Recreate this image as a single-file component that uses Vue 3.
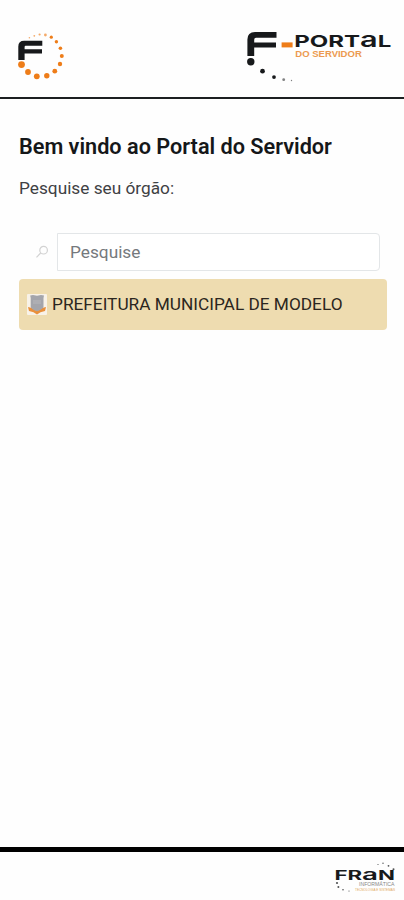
<script setup>
import { ref } from 'vue'

const query = ref('')
const orgs = [{ id: 1, name: 'PREFEITURA MUNICIPAL DE MODELO' }]

const ring = [
  [21.5, 64.6, 3.4], [28, 72, 2.9], [36.8, 76.3, 2.9], [46.8, 75.8, 2.7],
  [54.8, 71.2, 2.4], [60, 64, 2.2], [61.8, 56, 2], [60.4, 48.3, 1.8],
  [56.4, 41.7, 1.7], [51.3, 37.2, 1.6], [45.4, 35, 1.4], [39.6, 34.5, 1.1],
  [34.3, 35.8, 0.9], [29.4, 37.8, 0.8],
]
const tail = [[250.8, 61.7, 3.7], [262.5, 71.2, 2.4], [274, 77.1, 1.9], [283.7, 79.7, 1.4], [291.5, 80.5, 0.7]]
const franDots = [
  [378, 864.5, 0.6], [383, 863.3, 0.7], [388.5, 865.8, 0.9], [393.5, 869.3, 1],
  [337, 883, 1.1], [338.4, 887, 1], [343, 889.8, 0.8], [349, 891, 0.6],
]
</script>

<template>
  <div class="screen">
    <header class="header">
      <svg class="mark" width="64" height="60" viewBox="10 28 64 60" aria-hidden="true">
        <path class="ink" d="M18.3 60V46.5Q18.3 40.7 24.2 40.7H42.3V45.8H25.6Q24.6 45.8 24.6 47V49.2H42V53.4H24.6V60Z" />
        <circle v-for="(d, i) in ring" :key="i" :cx="d[0]" :cy="d[1]" :r="d[2]" :class="i > 9 ? 'amber pale' : 'amber'" />
      </svg>
      <svg class="portal" width="152" height="60" viewBox="243 28 152 60">
        <path class="ink" d="M247.4 56V39.5Q247.4 32 255 32H276.5V37.8H256Q254.2 37.8 254.2 39.8V42.4H276V47.6H254.2V56Z" />
        <circle v-for="(d, i) in tail" :key="i" :cx="d[0]" :cy="d[1]" :r="d[2]" :class="i > 2 ? 'ink faded' : 'ink'" />
        <rect class="amber" x="281.6" y="42.4" width="11" height="5" />
        <text class="word" x="294.3" y="46.5" font-size="16.4" textLength="97" lengthAdjust="spacingAndGlyphs">PORT<tspan class="tall" font-size="21">a</tspan>L</text>
        <text class="sub" x="295.3" y="56.8" font-size="9" textLength="66.5" lengthAdjust="spacingAndGlyphs">DO SERVIDOR</text>
      </svg>
    </header>

    <main class="content">
      <h1>Bem vindo ao Portal do Servidor</h1>
      <p>Pesquise seu órgão:</p>
      <label class="search">
        <svg width="14" height="14" viewBox="0 0 14 14" fill="none" aria-hidden="true">
          <circle cx="8.6" cy="5.2" r="3.8" />
          <path d="M5.7 8L1.5 12.3" />
        </svg>
        <input v-model="query" type="text" placeholder="Pesquise" />
      </label>
      <ul>
        <li v-for="org in orgs" :key="org.id">
          <svg width="20" height="21" viewBox="0 0 20 21" aria-hidden="true">
            <rect width="20" height="21" rx="1" fill="#f8f2e8" />
            <path d="M1 13L5 14L10 17L15 14L19 13L18 17L13.5 18.2L10 20.5L6.5 18.2L2 17Z" fill="#e9903c" />
            <path d="M3.2 1.5L6 1L10 1.8L14 1L17 1.5L16.5 4V13Q16 15 10 17.3Q4 15 3.7 13V4Z" fill="#a4a5ab" />
            <path d="M6 7H14M6 9H14" stroke="#bcbcc0" stroke-width=".8" />
          </svg>
          <span>{{ org.name }}</span>
        </li>
      </ul>
    </main>

    <footer class="footer">
      <svg width="68" height="34" viewBox="331 860 68 34">
        <circle v-for="(d, i) in franDots" :key="i" class="ink soft" :cx="d[0]" :cy="d[1]" :r="d[2]" />
        <text class="word" x="334.4" y="880.2" font-size="12.8" textLength="60.6" lengthAdjust="spacingAndGlyphs">FR<tspan class="tall" font-size="16">a</tspan>N</text>
        <text class="tiny" x="359" y="885.9" font-size="4.6" textLength="35.5" lengthAdjust="spacingAndGlyphs">INFORMÁTICA</text>
        <text class="tiny gold" x="355" y="890.9" font-size="3.4" textLength="40" lengthAdjust="spacingAndGlyphs">TECNOLOGIA E SISTEMAS</text>
      </svg>
    </footer>
  </div>
</template>

<style>
body { background: #fff; }
</style>

<style scoped>
.screen {
  box-sizing: border-box;
  height: 900px;
  display: flex;
  flex-direction: column;
  font-family: Roboto, sans-serif;
  color: #212529;
  background: #fefefe;
}
svg { display: block; flex: none; }
.header {
  box-sizing: border-box;
  height: 99px;
  padding: 28px 9px 0 10px;
  display: flex;
  justify-content: space-between;
  border-bottom: 2px solid #1c1f21;
}
.ink { fill: #17191b; }
.faded { opacity: .55; }
.soft { opacity: .75; }
.amber { fill: #ee7d19; }
.pale { opacity: .65; }
.word { font-family: Inter, sans-serif; font-weight: 700; fill: #17191b; }
.tall { font-weight: 600; }
.sub { font-family: "Liberation Sans", sans-serif; font-weight: 700; fill: #ec9a50; }
.tiny { font-family: "Liberation Sans", sans-serif; fill: #888; }
.gold { fill: #dfa85c; }
.content { flex: 1; padding: 35px 17px 0 19px; }
h1 {
  margin: 0;
  font-size: 21.67px;
  line-height: 26px;
  font-weight: 600;
  color: #151719;
  white-space: nowrap;
}
p { margin: 17px 0 0; font-size: 17.25px; line-height: 22px; color: #3e4144; }
.search { display: flex; align-items: center; margin: 34px 7px 0 16px; gap: 8px; }
.search svg { stroke: #d2d2d2; stroke-width: 1.2; margin-top: -1px; }
input {
  box-sizing: border-box;
  flex: 1;
  min-width: 0;
  height: 38px;
  padding: 0 12px 1px;
  border: 1px solid #e3e6e8;
  border-radius: 0 4px 4px 0;
  background: #fff;
  font: 17.25px Roboto, sans-serif;
  color: #212529;
  outline: none;
}
input::placeholder { color: #75797d; opacity: 1; }
ul { list-style: none; margin: 8px 0 0; padding: 0; }
li {
  box-sizing: border-box;
  height: 51px;
  display: flex;
  align-items: center;
  gap: 5px;
  padding-left: 8px;
  border-radius: 4px;
  background: #eedcb0;
  font-size: 17.25px;
  white-space: nowrap;
  color: #2b2620;
}
li span { padding-bottom: 2px; }
.footer {
  box-sizing: border-box;
  height: 53px;
  display: flex;
  justify-content: flex-end;
  padding: 8px 5px 0 0;
  border-top: 5px solid #000;
}
</style>
